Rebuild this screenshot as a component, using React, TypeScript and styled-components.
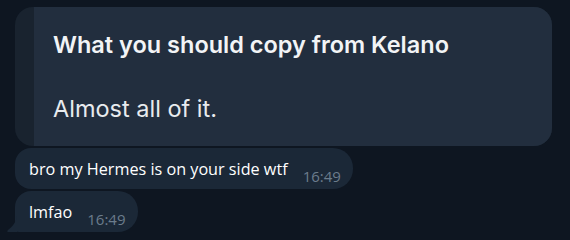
import styled, { createGlobalStyle } from "styled-components";

const GlobalStyle = createGlobalStyle`
  html, body {
    margin: 0;
    padding: 0;
    background: #0e1621;
    width: 570px;
    height: 240px;
    overflow: hidden;
  }
`;

const Chat = styled.div`
  display: flex;
  flex-direction: column;
  gap: 2px;
  padding: 7px 0 0 15px;
`;

const PhotoBubble = styled.div`
  display: flex;
  width: 537px;
  height: 139px;
  border-radius: 18px;
  overflow: hidden;
  background: #19232f;
`;

const PhotoEdge = styled.div`
  width: 19px;
  flex-shrink: 0;
`;

const PhotoBody = styled.div`
  flex: 1;
  background: #222e3e;
  padding: 23px 0 0 19px;
  font-family: Inter, "Noto Sans", sans-serif;
  color: #f2f4f6;
  font-size: 23.5px;
  line-height: 30px;
`;

const PhotoTitle = styled.div`
  font-weight: 600;
  margin-bottom: 34px;
`;

const PhotoLine = styled.div`
  font-weight: 400;
  color: #e8ebee;
`;

const Bubble = styled.div<{ $tail?: boolean }>`
  position: relative;
  align-self: flex-start;
  display: flex;
  align-items: flex-end;
  gap: 15px;
  height: 41px;
  box-sizing: border-box;
  padding: 0 12px 4px 14px;
  background: #1b2837;
  border-radius: ${(p) => (p.$tail ? "16px 20px 20px 4px" : "16px 20px 20px 16px")};
  font-family: "Open Sans", "Noto Sans", sans-serif;
  color: #ffffff;
`;

const Tail = styled.svg`
  position: absolute;
  left: -8px;
  bottom: 0;
`;

const Text = styled.span`
  font-size: 16.2px;
  line-height: 22px;
  margin-bottom: 5px;
`;

const Time = styled.span`
  font-size: 15px;
  line-height: 18px;
  color: #6b7c8c;
`;

export default function App() {
  return (
    <>
      <GlobalStyle />
      <Chat>
        <PhotoBubble>
          <PhotoEdge />
          <PhotoBody>
            <PhotoTitle>What you should copy from Kelano</PhotoTitle>
            <PhotoLine>Almost all of it.</PhotoLine>
          </PhotoBody>
        </PhotoBubble>
        <Bubble>
          <Text>bro my Hermes is on your side wtf</Text>
          <Time>16:49</Time>
        </Bubble>
        <Bubble $tail>
          <Tail width="10" height="16" viewBox="0 0 10 16">
            <path d="M10 0 V16 H1 C0 16 0 15 1 14 C6 10 9 6 10 0 Z" fill="#1b2837" />
          </Tail>
          <Text>lmfao</Text>
          <Time>16:49</Time>
        </Bubble>
      </Chat>
    </>
  );
}
